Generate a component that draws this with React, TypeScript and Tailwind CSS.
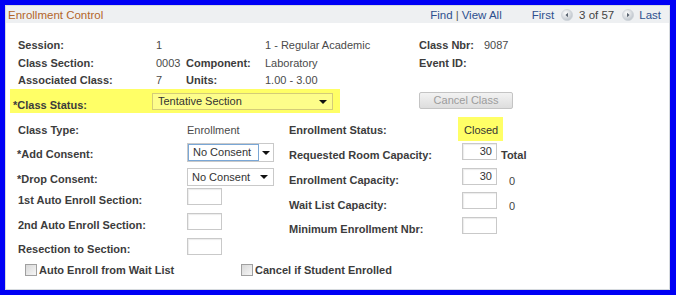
import type { ReactNode } from "react";

const font = "font-['Liberation_Sans',Arial,sans-serif]";

function Label({ children, className = "" }: { children: ReactNode; className?: string }) {
  return <span className={`block font-bold text-[11px] leading-[14px] text-[#3c3c3c] whitespace-nowrap ${className}`}>{children}</span>;
}

function Val({ children, className = "" }: { children: ReactNode; className?: string }) {
  return <span className={`block text-[11px] leading-[14px] text-[#4a4a4a] whitespace-nowrap ${className}`}>{children}</span>;
}

function Caret() {
  return <span className="w-0 h-0 border-l-[4px] border-r-[4px] border-t-[4px] border-l-transparent border-r-transparent border-t-[#111]" />;
}

function Box({ value = "" }: { value?: string }) {
  return (
    <div className="w-[35px] h-[17px] border border-[#c9c9c9] bg-white text-right pr-[4px] text-[11px] text-[#333] leading-[15px] shadow-[inset_1px_1px_1px_rgba(0,0,0,0.08)]">
      {value}
    </div>
  );
}

function NavArrow({ dir }: { dir: "left" | "right" }) {
  return (
    <svg width="12" height="12" viewBox="0 0 13 13">
      <defs>
        <radialGradient id={`g${dir}`} cx="40%" cy="35%" r="70%">
          <stop offset="0%" stopColor="#ffffff" />
          <stop offset="100%" stopColor="#b9c0c8" />
        </radialGradient>
      </defs>
      <circle cx="6.5" cy="6.5" r="6" fill={`url(#g${dir})`} stroke="#cdd2d8" strokeWidth="0.8" />
      {dir === "left" ? <path d="M7.6 4 L4.8 6.5 L7.6 9 Z" fill="#5a6470" /> : <path d="M5.4 4 L8.2 6.5 L5.4 9 Z" fill="#5a6470" />}
    </svg>
  );
}

function Check({ label }: { label: string }) {
  return (
    <div className="flex items-center gap-[2px]">
      <span className="w-[12px] h-[12px] border border-[#a0a0a0] bg-gradient-to-br from-[#d8d8d8] to-[#f6f6f6]" />
      <Label>{label}</Label>
    </div>
  );
}

export default function App() {
  return (
    <div className={`w-[676px] h-[295px] bg-[#0000f5] pt-[5px] pl-[5px] pr-[6px] pb-[5px] ${font}`}>
      <div className="w-full h-full bg-white border border-[#d6dade] flex flex-col">
        {/* header bar */}
        <div className="h-[17px] bg-[#eef0f2] flex items-center justify-between pl-[2px] pr-[8px] text-[11.5px] leading-[14px]">
          <span className="text-[#b3652a]">Enrollment Control</span>
          <div className="flex items-center text-[#2d4f8e]">
            <span>Find</span>
            <span className="mx-[3px] text-[#555]">|</span>
            <span>View All</span>
            <span className="ml-[30px]">First</span>
            <span className="ml-[7px] mr-[6px]"><NavArrow dir="left" /></span>
            <span className="text-[#444]">3 of 57</span>
            <span className="ml-[8px] mr-[5px]"><NavArrow dir="right" /></span>
            <span>Last</span>
          </div>
        </div>

        {/* top info */}
        <div className="pt-[13px] flex flex-col">
          <div className="h-[18px] flex items-center">
            <Label className="w-[150px] pl-[12px]">Session:</Label>
            <Val className="w-[109px]">1</Val>
            <Val className="w-[154px]">1 - Regular Academic</Val>
            <Label className="w-[65px]">Class Nbr:</Label>
            <Val>9087</Val>
          </div>
          <div className="h-[17px] flex items-center">
            <Label className="w-[150px] pl-[12px]">Class Section:</Label>
            <Val className="w-[30px]">0003</Val>
            <Label className="w-[79px]">Component:</Label>
            <Val className="w-[154px]">Laboratory</Val>
            <Label>Event ID:</Label>
          </div>
          <div className="h-[17px] flex items-center">
            <Label className="w-[150px] pl-[12px]">Associated Class:</Label>
            <Val className="w-[30px]">7</Val>
            <Label className="w-[79px]">Units:</Label>
            <Val>1.00 - 3.00</Val>
          </div>
          <div className="mt-[1px] flex items-start">
            <div className="ml-[4px] w-[330px] h-[24px] bg-[#ffff66] flex items-start">
              <Label className="w-[142px] pl-[3px] mt-[9px] text-[11.5px]">*Class Status:</Label>
              <div className="mt-[4px] w-[181px] h-[17px] border border-[#d4cc77] bg-[#fdfd8a] flex items-center justify-between pl-[5px] pr-[5px] text-[11px] text-[#333]">
                <span>Tentative Section</span>
                <Caret />
              </div>
            </div>
            <div className="mt-[3px] ml-[79px] w-[94px] h-[17px] border border-[#c4c4c4] bg-gradient-to-b from-[#f3f3f3] to-[#dddddd] rounded-[2px] flex items-center justify-center text-[11px] text-[#9c9c9c]">
              Cancel Class
            </div>
          </div>
        </div>

        {/* lower section */}
        <div className="flex mt-[4px]">
          <div className="w-[283px] flex flex-col">
            <div className="h-[26px] flex items-start">
              <Label className="w-[181px] pl-[12px] mt-[6px]">Class Type:</Label>
              <Val className="mt-[6px]">Enrollment</Val>
            </div>
            <div className="h-[25px] flex items-start">
              <Label className="w-[181px] pl-[11px] mt-[4px]">*Add Consent:</Label>
              <div className="w-[87px] h-[19px] border border-[#c9c9c9] flex items-center text-[11px] text-[#333]">
                <span className="h-full flex-1 border border-[#7aa7d6] pl-[4px] leading-[15px]">No Consent</span>
                <span className="w-[14px] flex justify-center"><Caret /></span>
              </div>
            </div>
            <div className="h-[20px] flex items-start">
              <Label className="w-[181px] pl-[11px] mt-[4px]">*Drop Consent:</Label>
              <div className="w-[87px] h-[18px] border border-[#c9c9c9] flex items-center justify-between pl-[4px] pr-[5px] text-[11px] text-[#333]">
                <span>No Consent</span>
                <Caret />
              </div>
            </div>
            <div className="h-[25px] flex items-start">
              <Label className="w-[181px] pl-[12px] mt-[5px]">1st Auto Enroll Section:</Label>
              <Box />
            </div>
            <div className="h-[25px] flex items-start">
              <Label className="w-[181px] pl-[12px] mt-[5px]">2nd Auto Enroll Section:</Label>
              <Box />
            </div>
            <div className="h-[25px] flex items-start">
              <Label className="w-[181px] pl-[12px] mt-[4px]">Resection to Section:</Label>
              <Box />
            </div>
          </div>

          <div className="flex flex-col">
            <div className="h-[26px] flex items-start">
              <Label className="w-[169px] mt-[6px]">Enrollment Status:</Label>
              <div className="w-[45px] h-[24px] bg-[#ffff66] pl-[6px] pt-[6px]">
                <Val className="text-[#333]">Closed</Val>
              </div>
            </div>
            <div className="h-[25px] flex items-start">
              <Label className="w-[173px] mt-[5px]">Requested Room Capacity:</Label>
              <Box value="30" />
              <Label className="ml-[4px] mt-[5px]">Total</Label>
            </div>
            <div className="h-[24px] flex items-start">
              <Label className="w-[173px] mt-[5px]">Enrollment Capacity:</Label>
              <Box value="30" />
              <span className="ml-[12px] mt-[6px] text-[11px] leading-[14px] text-[#444]">0</span>
            </div>
            <div className="h-[25px] flex items-start">
              <Label className="w-[173px] mt-[6px]">Wait List Capacity:</Label>
              <Box />
              <span className="ml-[12px] mt-[7px] text-[11px] leading-[14px] text-[#444]">0</span>
            </div>
            <div className="h-[25px] flex items-start">
              <Label className="w-[173px] mt-[5px]">Minimum Enrollment Nbr:</Label>
              <Box />
            </div>
          </div>
        </div>

        <div className="flex">
          <div className="w-[235px] pl-[19px]"><Check label="Auto Enroll from Wait List" /></div>
          <Check label="Cancel if Student Enrolled" />
        </div>
      </div>
    </div>
  );
}
